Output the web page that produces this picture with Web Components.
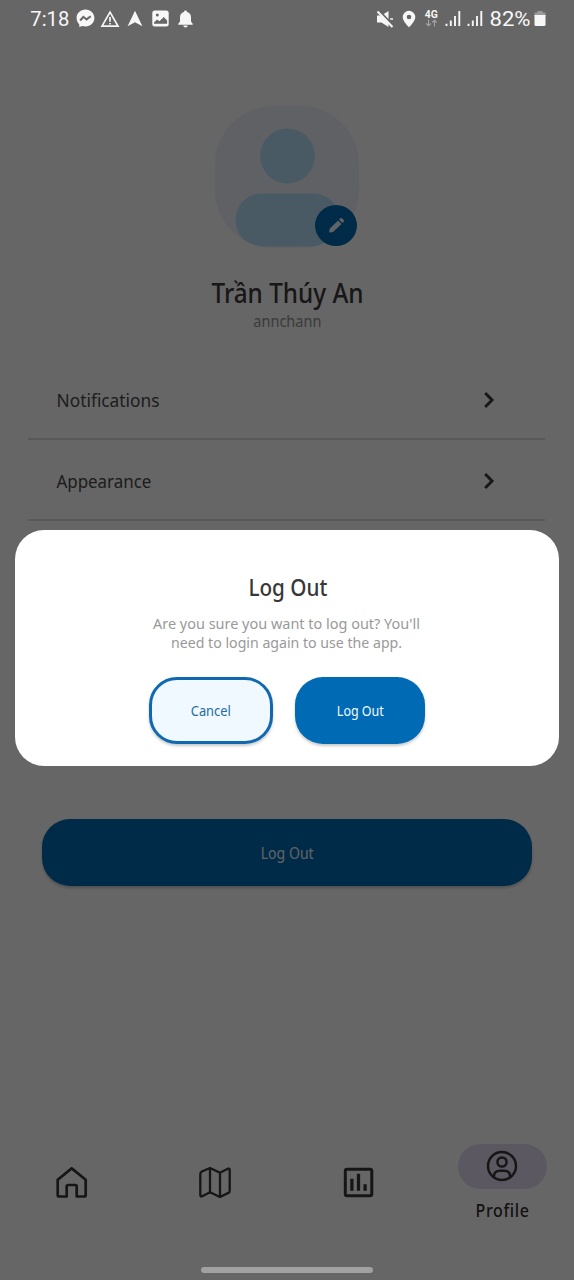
<!DOCTYPE html>
<html lang="en">
<head>
<meta charset="utf-8">
<title>Profile</title>
<style>
html,body{margin:0;padding:0;background:#fff;overflow:hidden}
body{width:574px;height:1280px;font-family:"Noto Sans","Open Sans",sans-serif}
</style>
</head>
<body>
<profile-app></profile-app>
<script>
const define = (name, html, setup) => {
  const template = document.createElement('template');
  template.innerHTML = html;
  customElements.define(name, class extends HTMLElement {
    connectedCallback() {
      if (this.shadowRoot) return;
      this.attachShadow({mode: 'open'}).append(template.content.cloneNode(true));
      if (setup) setup(this, this.shadowRoot);
    }
  });
};

/* One line of text condensed or widened to the width given in "w". */
define('fit-text', `<style>
:host{display:flex;justify-content:center;align-items:center;flex:none;white-space:nowrap}
span{display:block;flex:none}
</style><span><slot></slot></span>`, (host, root) => {
  const span = root.querySelector('span');
  const w = +host.getAttribute('w');
  host.style.width = w + 'px';
  span.style.transform = `scaleX(${w / span.getBoundingClientRect().width})`;
});

define('status-bar', `<style>
:host{position:absolute;inset:0 0 auto 0;height:37px;box-sizing:border-box;padding:0 28px 0 30px;display:flex;align-items:center;justify-content:space-between;color:#f7f7f7;font-family:Roboto,sans-serif}
div{display:flex;align-items:center}
svg{display:block;flex:none}
.time{font-size:20.5px}
.net{display:flex;flex-direction:column;align-items:center;width:14px;margin:0 7px 0 8px}
.g{font-size:10px;font-weight:700;line-height:10px;height:9px}
</style>
<div>
<fit-text class="time" w="39">7:18</fit-text>
<svg style="margin-left:7px" width="19" height="19" viewBox="0 0 19 19"><path d="M9.5.6C4.400.6.600 4.200.600 9.100c0 2.600 1 4.700 2.700 6.300v2.700l2.900-1.200c1 .3 2.100.5 3.300.5 5.100 0 8.900-3.500 8.900-8.300S14.600.6 9.500.6z" fill="currentColor"/><path d="M4.200 11.500l3.200-3.700 3.100 2.600 4.200-3.100" fill="none" stroke="#666" stroke-width="2"/></svg>
<svg style="margin-left:5px" width="20" height="18" viewBox="0 0 20 18"><path d="M10 2.200L18 16.200H2z" fill="none" stroke="currentColor" stroke-width="1.7"/><path d="M10 7v4.800M10 13v1.600" stroke="currentColor" stroke-width="1.7"/></svg>
<svg style="margin-left:7px" width="16" height="17" viewBox="0 0 16 17"><path d="M8 .8L15.400 16.200 8 12.200.6 16.200z" fill="currentColor"/></svg>
<svg style="margin-left:9px" width="17" height="17" viewBox="0 0 17 17"><rect x=".3" y=".6" width="16.400" height="15.800" rx="2.500" fill="currentColor"/><path d="M2 12.600l3.100-3 2.300 1.700 4.400-4.200 3.300 3.400v3.200H2z" fill="#666"/><circle cx="5.300" cy="4.900" r="1.500" fill="#666"/></svg>
<svg style="margin-left:8px" width="17" height="18" viewBox="0 0 17 18"><path d="M8.500.5c1 0 1.500.7 1.500 1.500 2.800.7 4 2.700 4 5.300v4.200l1.700 2.200v1H1.300v-1L3 11.500V7.300C3 4.700 4.200 2.700 7 2c0-.8.500-1.500 1.500-1.500zM6.300 15.600h4.400c0 1.200-1 2-2.200 2s-2.200-.8-2.200-2z" fill="currentColor"/></svg>
</div>
<div>
<svg width="18" height="18" viewBox="0 0 18 18"><path d="M1 5.500h4.500L12.500 1v16L5.500 12.500H1z" fill="currentColor"/><path d="M14.200 9H17" stroke="currentColor" stroke-width="1.500"/><path d="M2.500 0L18 16.300" stroke="#666" stroke-width="2"/><path d="M1.500 1.500L16.500 17" stroke="currentColor" stroke-width="2"/></svg>
<svg style="margin-left:8px" width="14" height="18" viewBox="0 0 14 18"><path fill-rule="evenodd" d="M7 .8a6.300 6.300 0 0 0-6.300 6.300C.7 11.500 7 17.400 7 17.400s6.300-5.900 6.300-10.300A6.300 6.300 0 0 0 7 .8zm0 3.900a2.300 2.300 0 1 1 0 4.600 2.300 2.300 0 0 1 0-4.600z" fill="currentColor"/></svg>
<span class="net"><fit-text class="g" w="13">4G</fit-text><svg width="13" height="8" viewBox="0 0 13 8"><path d="M3.500.5v6M1.200 4.500l2.300 2.300 2.300-2.300M9.500 7.500v-6M7.200 3.500l2.300-2.300 2.300 2.300" fill="none" stroke="#a4a4a4" stroke-width="1.100"/></svg></span>
<svg width="16" height="17" viewBox="0 0 16 17"><path d="M1.500 13.700V16M5.800 10.500V16M10 6v10M14.300 1v15" stroke="currentColor" stroke-width="1.900"/></svg>
<svg style="margin-left:6px" width="16" height="17" viewBox="0 0 16 17"><path d="M1.500 13.700V16M5.800 10.500V16M10 6v10M14.300 1v15" stroke="currentColor" stroke-width="1.900"/></svg>
<fit-text style="margin-left:7px;font-size:20.5px" w="41">82%</fit-text>
<svg style="margin-left:3px" width="12" height="17" viewBox="0 0 12 17"><path d="M3.500 1h5v1.500h2a1 1 0 0 1 1 1V6H.5V3.500a1 1 0 0 1 1-1h2z" fill="#9a9a9a"/><path d="M.5 5h11v9.500a1.500 1.500 0 0 1-1.500 1.500H2a1.500 1.500 0 0 1-1.500-1.500z" fill="currentColor"/></svg>
</div>`);

define('user-avatar', `<style>
:host{display:block;position:relative;width:146px;height:144px;margin:0 auto}
svg{display:block}
.edit{position:absolute;left:101px;top:100px}
</style>
<svg width="146" height="144" viewBox="0 0 146 144"><defs><clipPath id="c"><rect x="1" y="1" width="144" height="142" rx="58"/></clipPath></defs><rect x="1" y="1" width="144" height="142" rx="58" fill="#f0f3fd"/><g clip-path="url(#c)" fill="#b9e2fb"><circle cx="73.500" cy="51" r="27.500"/><rect x="21.500" y="88.500" width="104" height="53" rx="26"/></g></svg>
<svg class="edit" width="42" height="41" viewBox="0 0 42 41"><ellipse cx="21" cy="20.500" rx="21" ry="20.500" fill="#006bb5"/><path d="M14 27.500l.8-4 8.300-8 3.400 3.400-8.400 8zM24 14.600l1.300-1.300q.9-.7 1.700 0l1.700 1.700q.7.900 0 1.700L27.400 18z" fill="#f0f6ff"/></svg>`);

define('settings-row', `<style>
:host{display:flex;align-items:center;justify-content:space-between;height:81px;box-sizing:border-box;padding:2px 49.500px 0 28.500px;border-bottom:2px solid #dedede;color:#4a4a4a;font-size:18.500px}
svg{display:block}
</style><slot></slot><svg width="14" height="18" viewBox="0 0 14 18"><path d="M3.200 2l6.800 7-6.800 7" fill="none" stroke="#3c3c3c" stroke-width="3"/></svg>`);

define('pill-button', `<style>
:host{display:flex;align-items:center;justify-content:center;box-sizing:border-box;height:67px;border-radius:28px;background:#006bb4;color:#f0f9ff;box-shadow:0 2px 3px rgba(0,0,0,.22)}
:host([outline]){background:#f0f9ff;border:3px solid #1069b0;color:#1b6e9f}
</style><slot></slot>`);

define('nav-item', `<style>
:host{display:flex;flex-direction:column;align-items:center;flex:1;padding-top:38px}
:host([active]){padding-top:16px}
.pill{display:flex;align-items:center;justify-content:center}
:host([active]) .pill{width:89px;height:45px;border-radius:23px;background:#e6dcf2}
::slotted(svg){display:block}
:host([active]) ::slotted(svg){margin-bottom:1px}
::slotted(fit-text){margin-top:9px}
</style><div class="pill"><slot name="icon"></slot></div><slot></slot>`);

define('bottom-nav', `<style>
:host{display:flex;height:152px}
</style>
<nav-item><svg slot="icon" width="32" height="32" viewBox="0.3 -0.500 32 32" fill="none" stroke="#373737" stroke-width="2.700" stroke-linejoin="round"><path d="M2 13.200L16 1.900 30 13.200V28.500a1.500 1.500 0 0 1-1.500 1.500H21V20a1.500 1.500 0 0 0-1.500-1.500h-7A1.500 1.500 0 0 0 11 20v10H3.500A1.500 1.500 0 0 1 2 28.500z"/></svg></nav-item>
<nav-item><svg slot="icon" width="32" height="32" viewBox="0 -0.500 32 32" fill="none" stroke="#373737" stroke-width="2.300" stroke-linejoin="round"><path d="M1.300 8Q1.300 5.800 2.800 5L11 1.500l10 4.800 7.800-4.100q1.900-.6 1.900 1.300v20.700q0 1.500-1.300 2.200L21 30.500l-10-4.800-7.800 4.100q-1.900.6-1.900-1.300zM11 1.500v24.200M21 6.300v24.200"/></svg></nav-item>
<nav-item><svg slot="icon" width="32" height="32" viewBox="0.7 -0.300 32 32" fill="none" stroke="#373737" stroke-width="3"><rect x="3" y="3" width="26.500" height="26.500" rx="1.800"/><path d="M9.600 12.500v12M16.200 7.500v17M22.800 18v6.500" stroke-width="3.300"/></svg></nav-item>
<nav-item active><svg slot="icon" width="32" height="32" viewBox="0 0 32 32" fill="none" stroke="#373737" stroke-width="2.500"><circle cx="16" cy="16" r="14"/><circle cx="16" cy="12" r="4.600"/><path d="M8 27v-1q0-5.300 6-5.300h4q6 0 6 5.300v1"/></svg><fit-text w="54" style="font-size:17.500px;font-weight:500;letter-spacing:.7px;line-height:24px;color:#303030">Profile</fit-text></nav-item>`);

define('confirm-dialog', `<style>
:host{position:absolute;left:15px;right:15px;top:530px;height:236px;box-sizing:border-box;padding-top:42px;border-radius:29px;background:#fff;display:flex;flex-direction:column;align-items:center}
.title{font-size:23.500px;font-weight:500;line-height:30px;color:#373737}
.body{font-size:15px;line-height:18.500px;color:#999}
.actions{display:flex;gap:22px;margin:26px 1px 0 0}
.cancel{width:124px}.ok{width:130px}
</style>
<fit-text class="title" w="79" style="margin-left:1px">Log Out</fit-text>
<fit-text class="body" w="267" style="margin:12px 2px 0 0">Are you sure you want to log out? You'll</fit-text>
<fit-text class="body" w="231">need to login again to use the app.</fit-text>
<div class="actions">
<pill-button class="cancel" outline><fit-text w="40" style="font-size:14px">Cancel</fit-text></pill-button>
<pill-button class="ok"><fit-text w="47" style="font-size:14px;margin-left:1px">Log Out</fit-text></pill-button>
</div>`);

define('profile-app', `<style>
:host{display:block;position:relative;width:574px;height:1280px;background:#fff;overflow:hidden}
.page{display:flex;flex-direction:column;height:1280px;box-sizing:border-box;padding-top:105px}
.name{font-size:27px;font-weight:500;line-height:36px;color:#3a3a3a;margin:26px auto 0;padding-left:1px}
.user{font-size:15.500px;line-height:20px;color:#949494;margin:0 auto}
.rows{margin:28px 29px 0 28px}
.logout{margin:298px 42px 0}
bottom-nav{margin-top:auto}
.scrim{position:absolute;inset:0;background:rgba(0,0,0,.6)}
.handle{position:absolute;left:201px;top:1267px;width:172px;height:6px;border-radius:3px;background:#a1a1a1}
</style>
<div class="page">
<user-avatar></user-avatar>
<fit-text class="name" w="152">Trần Thúy An</fit-text>
<fit-text class="user" w="68">annchann</fit-text>
<div class="rows">
<settings-row><fit-text w="103">Notifications</fit-text></settings-row>
<settings-row><fit-text w="95">Appearance</fit-text></settings-row>
</div>
<pill-button class="logout"><fit-text w="53" style="font-size:15.500px">Log Out</fit-text></pill-button>
<bottom-nav></bottom-nav>
</div>
<div class="scrim"></div>
<status-bar></status-bar>
<confirm-dialog></confirm-dialog>
<div class="handle"></div>`);
</script>
</body>
</html>
